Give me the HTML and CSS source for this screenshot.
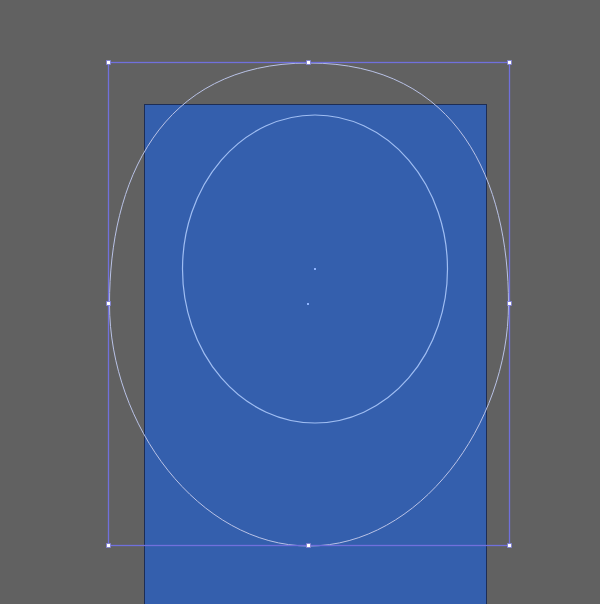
FILE: index.html
```html
<!DOCTYPE html>
<html>
<head>
<meta charset="utf-8">
<link rel="stylesheet" href="styles.css">
</head>
<body>
<div class="canvas">
<svg class="art" width="600" height="604" viewBox="0 0 600 604" xmlns="http://www.w3.org/2000/svg">
  <rect class="blue" x="144.5" y="104.5" width="342" height="520"/>
  <path class="outer" d="M309,63 C459,63 508.5,183 508.5,304 C508.5,425 419,546 309,546 C199,546 109.5,425 109.5,304 C109.5,183 159,63 309,63 Z"/>
  <ellipse class="inner" cx="315" cy="269" rx="132.5" ry="154"/>
  <rect class="bbox" x="108.5" y="62.5" width="401" height="483"/>
  <g class="handles">
    <rect x="106.5" y="60.5" width="4" height="4"/>
    <rect x="306.5" y="60.5" width="4" height="4"/>
    <rect x="507.5" y="60.5" width="4" height="4"/>
    <rect x="106.5" y="301.5" width="4" height="4"/>
    <rect x="507.5" y="301.5" width="4" height="4"/>
    <rect x="106.5" y="543.5" width="4" height="4"/>
    <rect x="306.5" y="543.5" width="4" height="4"/>
    <rect x="507.5" y="543.5" width="4" height="4"/>
  </g>
  <rect class="dot" x="314" y="268" width="2" height="2"/>
  <rect class="dot" x="307" y="303" width="2" height="2"/>
</svg>
</div>
</body>
</html>
```

FILE: styles.css
```css
html, body {
  margin: 0;
  padding: 0;
  background: #616161;
}
.canvas {
  width: 600px;
  height: 604px;
  overflow: hidden;
  background: #616161;
}
.art {
  display: block;
}
.blue {
  fill: #345fad;
  stroke: #1d2d55;
  stroke-width: 1;
}
.outer {
  fill: none;
  stroke: #b9c2e6;
  stroke-width: 1;
}
.inner {
  fill: none;
  stroke: #9fbdf2;
  stroke-width: 1.2;
}
.bbox {
  fill: none;
  stroke: #7070dc;
  stroke-width: 1.3;
}
.handles rect {
  fill: #ffffff;
  stroke: #7a7ad2;
  stroke-width: 0.8;
}
.dot {
  fill: #8fb4ff;
}
```
